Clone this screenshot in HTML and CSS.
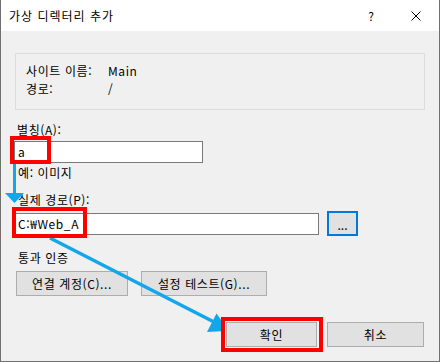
FILE: index.html
```html
<!DOCTYPE html>
<html lang="ko">
<head>
<meta charset="utf-8">
<title>가상 디렉터리 추가</title>
<link rel="stylesheet" href="styles.css">
</head>
<body>
<div class="window">
  <div class="titlebar">
    <span class="title">가상 디렉터리 추가</span>
    <span class="help">?</span>
    <svg class="close" width="10" height="10" viewBox="0 0 10 10"><path d="M0.5 0.5 L9.5 9.5 M9.5 0.5 L0.5 9.5" stroke="#000" stroke-width="1" fill="none"/></svg>
  </div>
  <div class="content">
    <div class="group">
      <span>사이트 이름:</span><span>Main</span>
      <span>경로:</span><span>/</span>
    </div>
    <div class="lbl l-alias">별칭(A):</div>
    <div class="tb tb-alias">a</div>
    <div class="lbl l-hint">예: 이미지</div>
    <div class="lbl l-path">실제 경로(P):</div>
    <div class="pathrow">
      <div class="tb tb-path">C:₩Web_A</div>
      <button class="btn browse">...</button>
    </div>
    <div class="lbl l-auth">통과 인증</div>
    <div class="btnrow">
      <button class="btn b-connect">연결 계정(C)...</button>
      <button class="btn b-test">설정 테스트(G)...</button>
    </div>
    <div class="footer">
      <button class="btn b-ok">확인</button>
      <button class="btn b-cancel">취소</button>
    </div>
  </div>
  <svg class="annot" width="440" height="362" viewBox="0 0 440 362">
    <defs>
      <clipPath id="leftOfBox"><rect x="0" y="0" width="221" height="362"/></clipPath>
    </defs>
    <g fill="#14a6ea" stroke="none">
      <rect x="13" y="164" width="3" height="31"/>
      <polygon points="5,193 24,193 14.5,203"/>
    </g>
    <g clip-path="url(#leftOfBox)">
      <line x1="50" y1="238" x2="214" y2="322" stroke="#14a6ea" stroke-width="3.5"/>
      <polygon points="216.5,313.5 229,331 207,332" fill="#14a6ea"/>
    </g>
    <g fill="none" stroke="#ff0000" stroke-width="4">
      <rect x="12" y="138" width="37" height="24"/>
      <rect x="14" y="209" width="71" height="27"/>
      <rect x="223" y="319" width="98" height="31"/>
    </g>
  </svg>
</div>
</body>
</html>
```
FILE: styles.css
```css
body {
  margin: 0;
  font-family: "Noto Sans CJK KR", "Malgun Gothic", sans-serif;
  font-size: 12px;
  letter-spacing: 0.6px;
  color: #000;
}
.window {
  position: relative;
  width: 440px;
  height: 362px;
  box-sizing: border-box;
  border: 1px solid #707070;
  border-top: none;
  background: #f0f0f0;
  display: flex;
  flex-direction: column;
  overflow: hidden;
}
.titlebar {
  height: 31px;
  flex-shrink: 0;
  background: #fff;
  display: flex;
  align-items: center;
}
.title {
  flex: 1;
  padding-left: 8px;
  line-height: 16px;
  letter-spacing: 1px;
}
.help {
  width: 10px;
  text-align: center;
  line-height: 16px;
  margin-right: 35px;
  letter-spacing: 0;
}
.close {
  display: block;
  margin-right: 18px;
}
.content {
  flex: 1;
  padding: 0 15px 0 13px;
}
.group {
  margin: 22px 0 0 1px;
  width: 410px;
  height: 57px;
  box-sizing: border-box;
  border: 1px solid #dcdcdc;
  padding: 8px 0 0 10px;
  display: grid;
  grid-template-columns: 82px auto;
  grid-auto-rows: 18px;
  align-content: start;
  line-height: 18px;
}
.lbl {
  line-height: 16px;
  margin-left: 4px;
}
.l-alias { margin-top: 12px; margin-left: 3px; }
.l-hint { margin-top: 2px; }
.l-path { margin-top: 11px; }
.l-auth { margin-top: 14px; }
.tb {
  height: 22px;
  box-sizing: border-box;
  border: 1px solid #7a7a7a;
  background: #fff;
  padding-left: 3px;
  line-height: 20px;
}
.tb-alias {
  width: 189px;
  margin-top: 3px;
}
.pathrow {
  margin-top: 3px;
  display: flex;
  align-items: center;
  gap: 8px;
}
.tb-path { width: 305px; }
.btn {
  height: 25px;
  box-sizing: border-box;
  border: 1px solid #adadad;
  background: #e1e1e1;
  font: inherit;
  letter-spacing: inherit;
  color: #000;
  padding: 0;
  line-height: 23px;
  text-align: center;
}
.browse {
  width: 31px;
  border: 2px solid #0078d7;
  letter-spacing: 0;
}
.btnrow {
  margin: 5px 0 0 2px;
  display: flex;
  gap: 13px;
}
.b-connect { width: 112px; }
.b-test { width: 126px; }
.footer {
  margin-top: 26px;
  display: flex;
  justify-content: flex-end;
  gap: 10px;
}
.b-ok { width: 91px; }
.b-cancel { width: 97px; }
.annot {
  position: absolute;
  left: -1px;
  top: 0;
  pointer-events: none;
}
```
